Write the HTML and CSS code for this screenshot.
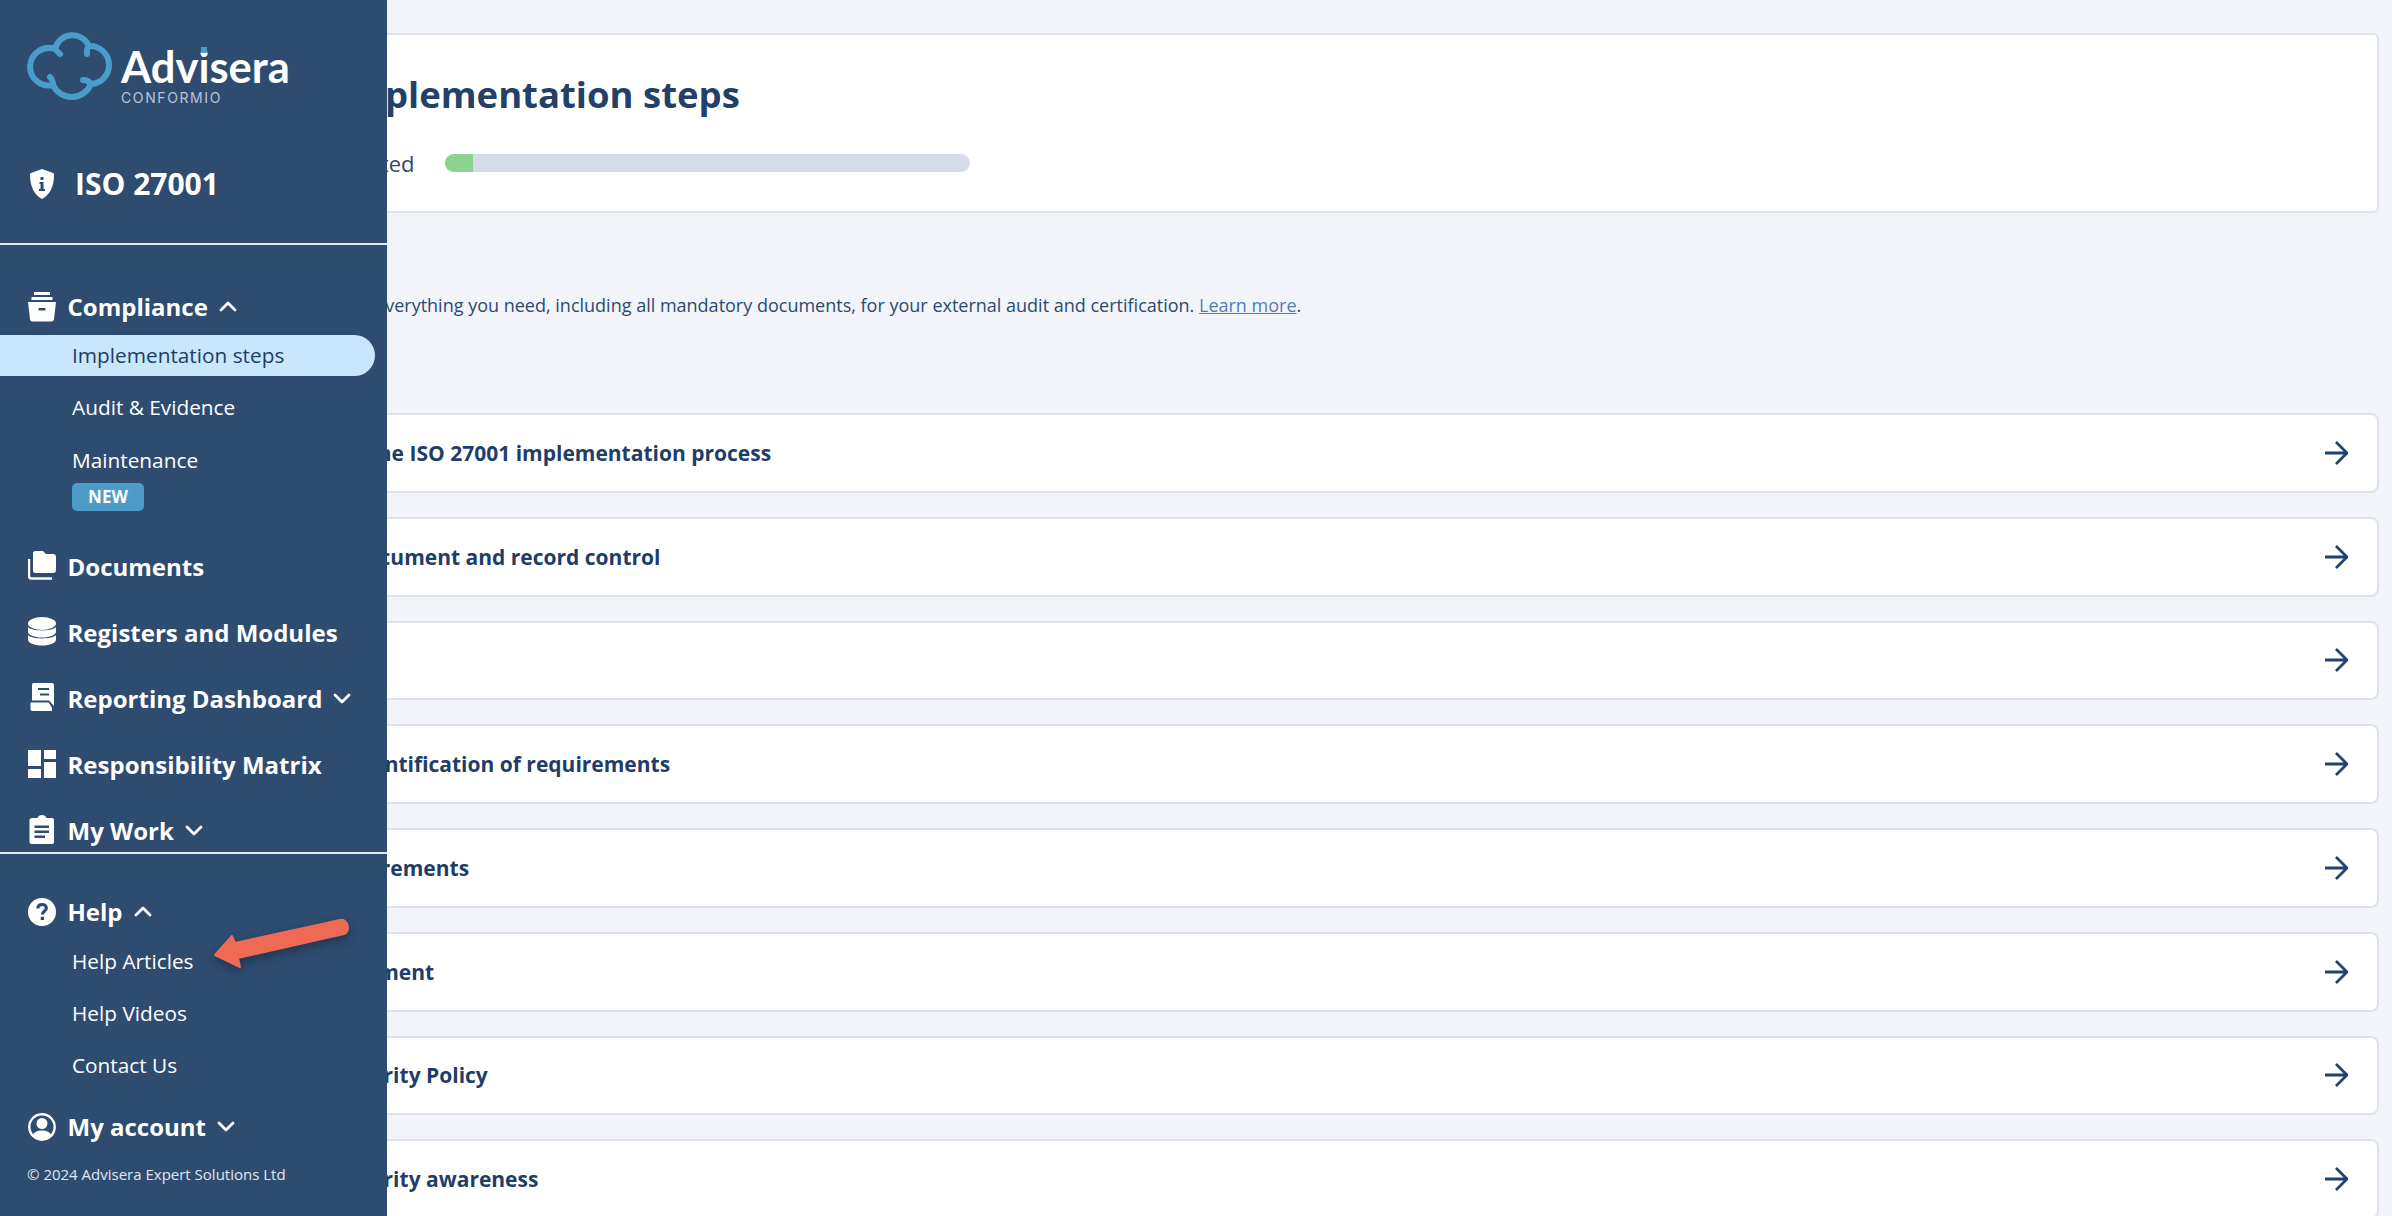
FILE: index.html
```html
<!DOCTYPE html>
<html lang="en">
<head>
<meta charset="utf-8">
<title>Implementation steps</title>
<link rel="stylesheet" href="styles.css">
</head>
<body>
<main class="main">
  <section class="hero">
    <h1 class="hero-title">Implementation steps</h1>
    <div class="hero-status">
      <span class="hero-label">Completed</span>
      <div class="progress"><div class="progress-fill" style="width:5.3%"></div></div>
    </div>
  </section>
  <p class="intro">You get everything you need, including all mandatory documents, for your external audit and certification. <a class="intro-link" href="#">Learn more</a>.</p>
  <div class="steps">
    <a class="step" href="#"><span class="step-label s1">Understand the ISO 27001 implementation process</span><svg class="step-arrow" viewBox="0 0 24 24"><path d="M1 12H22M12 1L23 12L12 23"/></svg></a>
    <a class="step" href="#"><span class="step-label s2">Document and record control</span><svg class="step-arrow" viewBox="0 0 24 24"><path d="M1 12H22M12 1L23 12L12 23"/></svg></a>
    <a class="step" href="#"><span class="step-label s3">Project start</span><svg class="step-arrow" viewBox="0 0 24 24"><path d="M1 12H22M12 1L23 12L12 23"/></svg></a>
    <a class="step" href="#"><span class="step-label s4">Identification of requirements</span><svg class="step-arrow" viewBox="0 0 24 24"><path d="M1 12H22M12 1L23 12L12 23"/></svg></a>
    <a class="step" href="#"><span class="step-label s5">Requirements</span><svg class="step-arrow" viewBox="0 0 24 24"><path d="M1 12H22M12 1L23 12L12 23"/></svg></a>
    <a class="step" href="#"><span class="step-label s6">Management</span><svg class="step-arrow" viewBox="0 0 24 24"><path d="M1 12H22M12 1L23 12L12 23"/></svg></a>
    <a class="step" href="#"><span class="step-label s7">Security Policy</span><svg class="step-arrow" viewBox="0 0 24 24"><path d="M1 12H22M12 1L23 12L12 23"/></svg></a>
    <a class="step" href="#"><span class="step-label s7">Security awareness</span><svg class="step-arrow" viewBox="0 0 24 24"><path d="M1 12H22M12 1L23 12L12 23"/></svg></a>
  </div>
</main>

<aside class="sidebar">
  <div class="brand">
    <svg class="brand-cloud" viewBox="0 0 88 68"><path d="M33 22L28 17A18 18 0 0 1 62 14A19 19 0 0 1 64 52A20.700 20.700 0 0 1 26 53A18.750 18.750 0 1 1 28 17"/><path d="M62 14C60 16 59.500 19 60 22M64 52C62 49 59 48 56 48M26 53C26 50 25 47 23 45"/></svg>
    <div class="brand-text">
      <span class="brand-name">Adv<span class="brand-i">i</span>sera</span>
      <span class="brand-sub">CONFORMIO</span>
    </div>
  </div>
  <div class="product">
    <svg class="product-icon" viewBox="0 0 24 30"><path class="ic" d="M12 0L23 4C24 4.500 24 5 24 6C24 17 20 26 12 30C4 26 0 17 0 6C0 5 0 4.500 1 4Z"/><path class="ic-cut" d="M10.500 8h3v3h-3zM9.500 13h4v7h1.500v2h-6v-2h1.500v-5h-1z"/></svg>
    <span class="product-name">ISO 27001</span>
  </div>
  <nav class="nav-main">
    <a class="nav-item nav-head" href="#">
      <svg class="nav-icon" viewBox="0 0 28 30"><path class="ic" d="M6 0H22V3H6ZM3.500 5H24.500V8H3.500ZM0 10H28L26 27C26 28.500 25 29.500 23.500 29.500H4.500C3 29.500 2 28.500 2 27Z"/><path class="ic-cut" d="M10.500 16H17.500V18.500H10.500Z"/></svg>
      <span class="nav-label">Compliance</span>
      <svg class="chev" viewBox="0 0 18 11"><path d="M2 9L9 2L16 9"/></svg>
    </a>
    <a class="sub-item sub-active" href="#">Implementation steps</a>
    <a class="sub-item" href="#">Audit &amp; Evidence</a>
    <a class="sub-item sub-tall" href="#">Maintenance<span class="badge">NEW</span></a>
    <a class="nav-item" href="#">
      <svg class="nav-icon" viewBox="0 0 28 30"><path class="ic" d="M5 2C5 1 6 0 7 0H15L18 3H25C27 3 28 4 28 6V19C28 21 27 22 25 22H7C6 22 5 21 5 20Z"/><path class="ic-line" d="M1 8V25C1 26.500 2 27.500 3.500 27.500H24"/></svg>
      <span class="nav-label">Documents</span>
    </a>
    <a class="nav-item" href="#">
      <svg class="nav-icon" viewBox="0 0 28 30"><ellipse class="ic" cx="14" cy="6.500" rx="14" ry="6.500"/><path class="ic" d="M0 10C3 14.500 25 14.500 28 10V14.500C28 18 22 20.500 14 20.500C6 20.500 0 18 0 14.500Z"/><path class="ic" d="M0 18C3 22.500 25 22.500 28 18V22.500C28 26 22 28.500 14 28.500C6 28.500 0 26 0 22.500Z"/></svg>
      <span class="nav-label">Registers and Modules</span>
    </a>
    <a class="nav-item" href="#">
      <svg class="nav-icon" viewBox="0 0 28 30"><path class="ic" d="M4 1.500C4 .5 5 0 6 0H24C25.500 0 26 1 26 2V23L21 17.500H4Z"/><path class="ic" d="M3 19.500H20.500L24 24.500V28H4.500C3 28 2.500 27 2.500 26V20Z"/><path class="ic-cut" d="M10 5H21V7H10ZM12 10.500H21V12.500H12Z"/></svg>
      <span class="nav-label">Reporting Dashboard</span>
      <svg class="chev" viewBox="0 0 18 11"><path d="M2 2L9 9L16 2"/></svg>
    </a>
    <a class="nav-item" href="#">
      <svg class="nav-icon" viewBox="0 0 28 30"><path class="ic" d="M0 1H13V17H0ZM0 20H13V29H0ZM16 1H28V10H16ZM16 13H28V29H16Z"/></svg>
      <span class="nav-label">Responsibility Matrix</span>
    </a>
    <a class="nav-item" href="#">
      <svg class="nav-icon" viewBox="0 0 28 30"><path class="ic" d="M4 3H9.500C10 1 12 0 14 0C16 0 18 1 18.500 3H24C25.500 3 26 4 26 5V27C26 28.500 25 29 24 29H4C2.500 29 1.500 28.500 1.500 27V5C1.500 4 2.500 3 4 3Z"/><path class="ic-cut" d="M6.500 10.500H21V13H6.500ZM6.500 15.500H21V18H6.500ZM6.500 20.500H17V23H6.500Z"/></svg>
      <span class="nav-label">My Work</span>
      <svg class="chev" viewBox="0 0 18 11"><path d="M2 2L9 9L16 2"/></svg>
    </a>
  </nav>
  <nav class="nav-bottom">
    <a class="nav-item nav-head-help" href="#">
      <svg class="nav-icon" viewBox="0 0 28 30"><circle class="ic" cx="14" cy="15" r="14"/><path class="ic-stroke" d="M9.800 11.500C10 8.800 12 7.500 14.200 7.500C16.500 7.500 18.300 9 18.300 11.200C18.300 14 14.300 14.500 14.300 17.500"/><path class="ic-cut" d="M12.700 19.800H16V23H12.700Z"/></svg>
      <span class="nav-label">Help</span>
      <svg class="chev" viewBox="0 0 18 11"><path d="M2 9L9 2L16 9"/></svg>
    </a>
    <a class="sub-item sub-help" href="#">Help Articles</a>
    <a class="sub-item sub-help" href="#">Help Videos</a>
    <a class="sub-item sub-help" href="#">Contact Us</a>
    <a class="nav-item nav-account" href="#">
      <svg class="nav-icon" viewBox="0 0 28 30"><circle class="ic-line" cx="14" cy="15" r="12.700"/><circle class="ic" cx="14" cy="11.500" r="5.500"/><path class="ic" d="M4.500 23.500C6 20 9 18.500 14 18.500C19 18.500 22 20 23.500 23.500C21 26.500 18 28 14 28C10 28 7 26.500 4.500 23.500Z"/></svg>
      <span class="nav-label">My account</span>
      <svg class="chev" viewBox="0 0 18 11"><path d="M2 2L9 9L16 2"/></svg>
    </a>
    <p class="copyright">© 2024 Advisera Expert Solutions Ltd</p>
  </nav>
  <svg class="annotation" viewBox="0 0 150 60"><path d="M10 40L27 21L30 28L135 5C143 3 146 17 139 19L33 43L35 52Z"/></svg>
</aside>
</body>
</html>
```

FILE: styles.css
```css
* { box-sizing: border-box; }
html, body { margin: 0; height: 1216px; overflow: hidden; }
body {
  background: #f2f4f9;
  font-family: "Open Sans", "Liberation Sans", sans-serif;
  color: #1f3d68;
  position: relative;
}
a { text-decoration: none; color: inherit; }

/* main column */
.main { padding: 33px 13px 0 200px; }
.hero {
  height: 180px;
  background: #fff;
  border: 2px solid #dde3ed;
  border-radius: 6px;
  padding: 37px 0 0 135px;
}
.hero-title { margin: 0; font-size: 36.500px; line-height: 44px; font-weight: 700; color: #234068; }
.hero-status { display: flex; align-items: center; margin-top: 35px; height: 24px; }
.hero-label { flex: none; margin-left: -35px; width: 143px; font-size: 22px; line-height: 24px; color: #33466b; }
.progress { width: 525px; height: 18px; border-radius: 9px; background: #d4dbe6; overflow: hidden; }
.progress-fill { height: 100%; background: #8ad48f; }
.intro { margin: 79px 0 0 107.500px; font-size: 18px; line-height: 26px; color: #2b4a72; }
.intro-link { color: #4d7fbd; text-decoration: underline; }
.steps { display: flex; flex-direction: column; gap: 24px; margin-top: 95px; }
.step {
  height: 79.750px;
  background: #fff;
  border: 2px solid #dde3ed;
  border-radius: 8px;
  display: flex;
  align-items: center;
  justify-content: space-between;
  padding-right: 29px;
}
.step-label { font-size: 21px; font-weight: 700; color: #1f3d68; white-space: nowrap; }
.s1 { padding-left: 37px; }
.s2 { padding-left: 149px; }
.s3 { padding-left: 4px; }
.s4 { padding-left: 150px; }
.s5 { padding-left: 119px; }
.s6 { padding-left: 93px; }
.s7 { padding-left: 133px; }
.step-arrow { width: 24px; height: 24px; fill: none; stroke: #1f4272; stroke-width: 2.800; }

/* sidebar overlay */
.sidebar {
  position: absolute;
  left: 0;
  top: 0;
  width: 387px;
  height: 1216px;
  background: #2e4c70;
  color: #fff;
}
.brand { display: flex; height: 127px; padding: 32px 0 0 27px; gap: 6px; }
.brand-cloud { flex: none; width: 88px; height: 68px; fill: none; stroke: #4a9ccb; stroke-width: 6; stroke-linecap: round; stroke-linejoin: round; }
.brand-text { display: flex; flex-direction: column; }
.brand-name { font-family: "Lato", sans-serif; font-size: 43.500px; line-height: 48px; font-weight: 700; margin-top: 10px; }
.brand-i { position: relative; }
.brand-i::after { content: ""; position: absolute; left: 3px; top: 7px; width: 6px; height: 6px; background: #4a9ccb; }
.brand-sub { font-family: "Inter", sans-serif; font-size: 14px; line-height: 16px; letter-spacing: 1.600px; color: #b9c5d4; }
.product {
  display: flex;
  align-items: center;
  gap: 21px;
  height: 117.500px;
  padding: 0 0 2px 30px;
  border-bottom: 2px solid #dfe9f4;
}
.product-icon { width: 24px; height: 30px; }
.product-name { font-size: 30px; font-weight: 700; }
.ic { fill: #fff; }
.ic-cut { fill: #2e4c70; }
.ic-line { fill: none; stroke: #fff; stroke-width: 2.400; }
.ic-stroke { fill: none; stroke: #2e4c70; stroke-width: 3.200; }
.nav-main { height: 609px; padding-top: 37px; border-bottom: 2px solid #dfe9f4; overflow: hidden; }
.nav-bottom { padding-top: 35px; }
.nav-item { display: flex; align-items: center; height: 66px; padding-left: 28px; }
.nav-head { height: 50px; }
.nav-head-help { height: 46px; }
.nav-icon { width: 28px; height: 30px; flex: none; margin-right: 11.500px; }
.nav-label { font-size: 24px; font-weight: 700; white-space: nowrap; }
.chev { width: 18px; height: 11px; margin-left: 11px; fill: none; stroke: #fff; stroke-width: 2.800; stroke-linecap: round; stroke-linejoin: round; }
.sub-item { display: flex; flex-direction: column; align-items: flex-start; justify-content: center; height: 52.500px; padding-left: 72px; font-size: 20.800px; }
.sub-help { height: 52px; }
.sub-active { height: 41px; margin: 3px 12px 5.500px 0; background: #c8e6fc; color: #1f3d68; border-radius: 0 21px 21px 0; }
.sub-tall { height: 99.500px; justify-content: flex-start; padding-top: 12.500px; }
.badge { margin-top: 8.500px; width: 72px; height: 28px; border-radius: 5px; background: #4d9bc9; font-size: 17px; line-height: 28px; font-weight: 700; text-align: center; }
.nav-account { margin-top: 3px; }
.copyright { margin: 0; padding: 4.500px 0 0 27px; font-size: 15px; line-height: 20px; color: #e0e7f0; }
.annotation {
  position: absolute;
  left: 205px;
  top: 915px;
  width: 150px;
  height: 60px;
  fill: #ee6a55;
  stroke: #ee6a55;
  stroke-width: 2;
  stroke-linejoin: round;
  filter: drop-shadow(0 4px 5px rgba(0,0,0,.3));
}
```
